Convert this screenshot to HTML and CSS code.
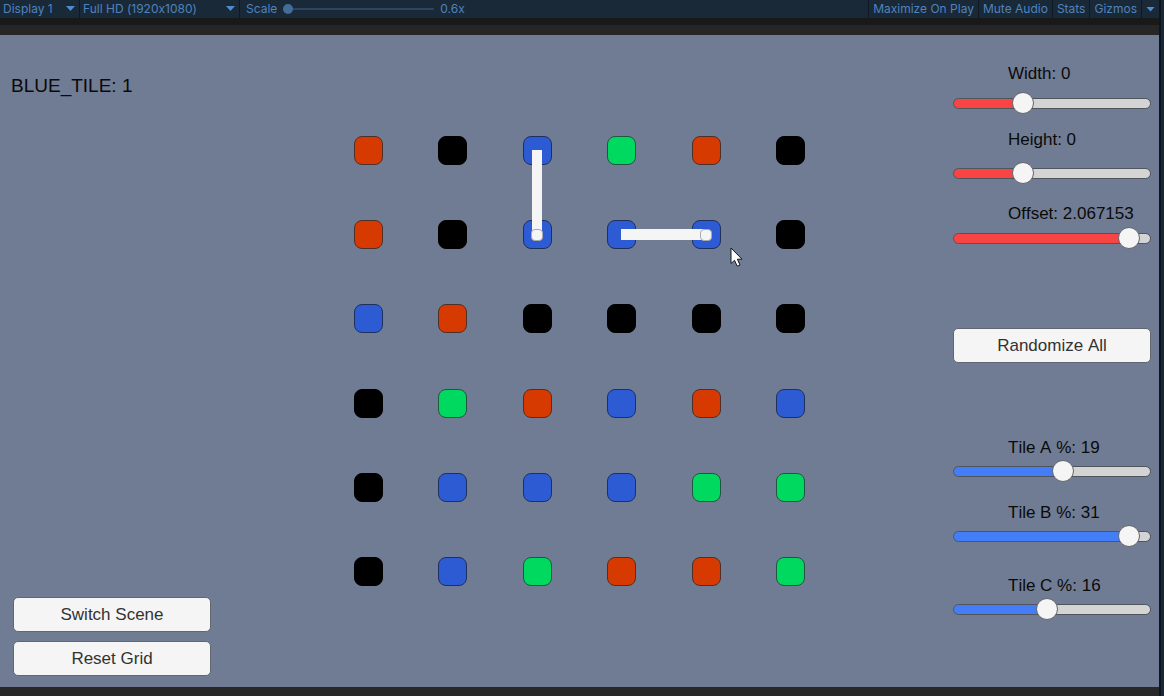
FILE: index.html
```html
<!DOCTYPE html>
<html lang="en">
<head>
<meta charset="utf-8">
<title>Game View</title>
<link rel="stylesheet" href="styles.css">
</head>
<body>
<div class="window">
  <header class="toolbar">
    <div class="dropdown dropdown-display">
      <select aria-label="Display"><option>Display 1</option></select>
    </div>
    <div class="dropdown dropdown-resolution">
      <select aria-label="Resolution"><option>Full HD (1920x1080)</option></select>
    </div>
    <div class="scale">
      <label for="scale">Scale</label>
      <input class="scale-range" id="scale" type="range" min="0" max="100" value="0">
      <output for="scale">0.6x</output>
    </div>
    <div class="toolbar-actions">
      <button type="button">Maximize On Play</button>
      <button type="button">Mute Audio</button>
      <button type="button">Stats</button>
      <button type="button">Gizmos</button>
      <button type="button" class="gizmos-menu" aria-label="Gizmos options"><span class="caret"></span></button>
    </div>
  </header>
  <div class="frame-top"></div>
  <main class="game">
    <section class="left-panel">
      <p class="status">BLUE_TILE: 1</p>
      <div class="scene-actions">
        <button type="button" class="button">Switch Scene</button>
        <button type="button" class="button">Reset Grid</button>
      </div>
    </section>

    <section class="board">
      <i class="tile red"></i><i class="tile black"></i><i class="tile blue"><i class="link link-down"></i></i><i class="tile green"></i><i class="tile red"></i><i class="tile black"></i>
      <i class="tile red"></i><i class="tile black"></i><i class="tile blue"><i class="link-end"></i></i><i class="tile blue"><i class="link link-right"></i></i><i class="tile blue"><i class="link-end"></i><svg class="cursor" viewBox="0 0 14 21" aria-hidden="true"><path d="M1 1V16.500L4.500 13.300L7.200 19.200L10 18L7.400 12.200H12Z"/></svg></i><i class="tile black"></i>
      <i class="tile blue"></i><i class="tile red"></i><i class="tile black"></i><i class="tile black"></i><i class="tile black"></i><i class="tile black"></i>
      <i class="tile black"></i><i class="tile green"></i><i class="tile red"></i><i class="tile blue"></i><i class="tile red"></i><i class="tile blue"></i>
      <i class="tile black"></i><i class="tile blue"></i><i class="tile blue"></i><i class="tile blue"></i><i class="tile green"></i><i class="tile green"></i>
      <i class="tile black"></i><i class="tile blue"></i><i class="tile green"></i><i class="tile red"></i><i class="tile red"></i><i class="tile green"></i>
    </section>

    <section class="right-panel">
      <div class="fields fields-red">
        <div class="field field-width">
          <label for="width">Width: 0</label>
          <input class="slider" id="width" type="range" min="0" max="1" step="any" value="0.332" style="--value: 0.332">
        </div>
        <div class="field field-height">
          <label for="height">Height: 0</label>
          <input class="slider" id="height" type="range" min="0" max="1" step="any" value="0.332" style="--value: 0.332">
        </div>
        <div class="field">
          <label for="offset">Offset: 2.067153</label>
          <input class="slider" id="offset" type="range" min="0" max="1" step="any" value="0.945" style="--value: 0.945">
        </div>
      </div>
      <button type="button" class="button randomize">Randomize All</button>
      <div class="fields fields-blue">
        <div class="field">
          <label for="tile-a">Tile A %: 19</label>
          <input class="slider" id="tile-a" type="range" min="0" max="1" step="any" value="0.563" style="--value: 0.563">
        </div>
        <div class="field">
          <label for="tile-b">Tile B %: 31</label>
          <input class="slider" id="tile-b" type="range" min="0" max="1" step="any" value="0.94" style="--value: 0.94">
        </div>
        <div class="field field-tile-c">
          <label for="tile-c">Tile C %: 16</label>
          <input class="slider" id="tile-c" type="range" min="0" max="1" step="any" value="0.47" style="--value: 0.47">
        </div>
      </div>
    </section>
  </main>
</div>
</body>
</html>
```
FILE: styles.css
```css
* {
  box-sizing: border-box;
}

body {
  margin: 0;
  background: #1a2836;
  font-family: "Liberation Sans", Arial, sans-serif;
}

.window {
  display: flex;
  flex-direction: column;
  min-height: 100vh;
  margin-right: 3px;
  padding-bottom: 9px;
  border-right: 2px solid #0d151e;
  background: #282828;
}

/* Editor toolbar */
.toolbar {
  display: flex;
  height: 18px;
  background: #1a2938;
  color: #4f83bd;
  font: 12px/18px Inter, sans-serif;
  font-feature-settings: "calt" 0;
}

.toolbar select,
.toolbar button {
  appearance: none;
  margin: 0;
  padding: 0;
  border: 0;
  background: none;
  color: inherit;
  font: inherit;
  font-feature-settings: inherit;
}

.dropdown {
  position: relative;
  border-right: 1px solid #0f1923;
}

.dropdown select {
  width: 100%;
  height: 18px;
  padding-left: 3px;
}

.dropdown::after,
.caret {
  width: 9px;
  height: 5px;
  background: #4f8ccb;
  clip-path: polygon(0 0, 100% 0, 50% 100%);
}

.dropdown::after {
  content: "";
  position: absolute;
  top: 6px;
  right: 4px;
  pointer-events: none;
}

.dropdown-display {
  width: 80px;
}

.dropdown-resolution {
  width: 160px;
}

.scale {
  display: flex;
  align-items: center;
  gap: 6px;
  padding-left: 6px;
}

.scale-range {
  appearance: none;
  width: 151px;
  height: 10px;
  margin: 0;
  background: linear-gradient(#2b4561, #2b4561) center / 100% 2px no-repeat;
}

.scale-range::-webkit-slider-thumb {
  appearance: none;
  width: 10px;
  height: 10px;
  border-radius: 50%;
  background: #446c98;
}

.toolbar-actions {
  display: flex;
  margin-left: auto;
}

.toolbar .toolbar-actions button {
  padding: 0 4px;
  border-left: 1px solid #0f1923;
}

.toolbar .toolbar-actions .gizmos-menu {
  display: flex;
  align-items: center;
}

.frame-top {
  height: 17px;
  border-top: 7px solid #191919;
  background: #262626;
}

/* Game surface */
.game {
  display: grid;
  flex: 1;
  grid-template-columns: 1fr auto 1fr;
  background: #707c93;
  color: #0a0a0a;
  font-size: 17px;
  font-kerning: none;
  line-height: 20px;
}

.left-panel {
  display: flex;
  flex-direction: column;
  justify-content: space-between;
  padding: 41px 11px 11px;
}

.status {
  margin: 0;
  font-size: 19px;
}

.scene-actions {
  display: grid;
  gap: 9px;
  width: 200px;
  padding-left: 2px;
}

.button {
  width: 100%;
  height: 35px;
  padding: 0;
  border: 1px solid #62666e;
  border-radius: 5px;
  background: #f5f5f5;
  color: #323232;
  font: inherit;
}

.board {
  display: grid;
  grid-template-columns: repeat(6, 29px);
  grid-template-rows: repeat(6, 29px);
  place-content: space-between;
  align-self: center;
  width: 451px;
  height: 450px;
}

.tile {
  position: relative;
  border: 1px solid #2b303a;
  border-radius: 8px;
}

.red {
  background: #d63a00;
  border-color: #4d3029;
}

.black {
  background: #000;
  border-color: #000;
}

.blue {
  background: #2d5bd3;
  border-color: #1f305d;
}

.green {
  background: #00d95f;
  border-color: #1f5741;
}

/* Connectors drawn over the tiles they join */
.link,
.link-end {
  position: absolute;
  z-index: 1;
  background: #f5f5f5;
}

.link-down {
  top: 13px;
  left: 8px;
  width: 10px;
  height: 85px;
}

.link-right {
  top: 8px;
  left: 13px;
  width: 85px;
  height: 11px;
}

.link-end {
  z-index: 2;
  top: 8px;
  left: 7px;
  width: 12px;
  height: 12px;
  border: 1px solid #aaa;
  border-radius: 4px;
}

.cursor {
  position: absolute;
  z-index: 3;
  top: 26px;
  left: 37px;
  width: 14px;
  height: 21px;
  fill: #fff;
  stroke: #111820;
}

.right-panel {
  justify-self: end;
  width: 206px;
  padding: 29px 8px 20px 0;
}

.field {
  display: grid;
}

.field label {
  padding-left: 55px;
}

.fields-red .field {
  gap: 3px;
}

.fields-red .field-width {
  gap: 8px;
  margin-bottom: 16px;
}

.fields-red .field-height {
  gap: 12px;
  margin-bottom: 20px;
}

.randomize {
  margin: 79px 0 75px;
}

.fields-blue .field {
  gap: 2px;
  margin-bottom: 21px;
}

.fields-blue .field-tile-c {
  margin: 29px 0 0;
}

.fields-red {
  --fill: #f94444;
}

.fields-blue {
  --fill: #437ef8;
}

.slider {
  appearance: none;
  width: 100%;
  height: 22px;
  margin: 0;
  background: none;
}

.slider::-webkit-slider-runnable-track {
  --stop: calc(11px + var(--value) * (100% - 22px));
  height: 11px;
  border: 1px solid #50545d;
  border-radius: 6px;
  background: linear-gradient(to right, var(--fill) var(--stop), #d4d4d4 var(--stop));
}

.slider::-webkit-slider-thumb {
  appearance: none;
  width: 22px;
  height: 22px;
  margin-top: -7px;
  border: 1px solid #62666e;
  border-radius: 50%;
  background: #f5f5f5;
}
```
